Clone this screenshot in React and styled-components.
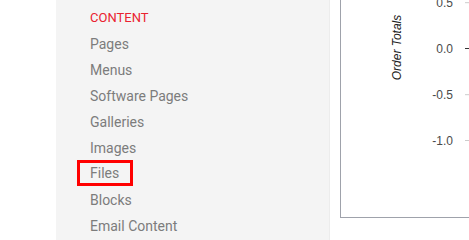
import React from "react";
import styled, { createGlobalStyle } from "styled-components";

const GlobalStyle = createGlobalStyle`
  html, body {
    margin: 0;
    padding: 0;
    background: #ffffff;
  }
  body {
    width: 469px;
    height: 240px;
    overflow: hidden;
  }
`;

const Page = styled.div`
  display: flex;
  flex-direction: row;
  height: 240px;
  padding-left: 56px;
`;

const Sidebar = styled.nav`
  width: 274px;
  flex-shrink: 0;
  background: #f4f4f4;
  border-right: 1px solid #ececec;
  padding: 5px 0 0 34px;
  box-sizing: border-box;
  font-family: Roboto, "Liberation Sans", sans-serif;
`;

const SectionTitle = styled.div`
  font-size: 13px;
  line-height: 26px;
  color: #ea2230;
  text-transform: uppercase;
`;

const NavItem = styled.div`
  font-size: 14px;
  line-height: 26px;
  height: 26px;
  color: #7c7c7c;
`;

const NavLabel = styled.span`
  display: inline-block;
  vertical-align: top;
  ${({ $marked }) =>
    $marked &&
    `
    box-sizing: border-box;
    height: 26px;
    margin: -1px 0 0 -13px;
    padding: 0 11px 0 10px;
    border: 3px solid #ff0000;
    line-height: 20px;
  `}
`;

const Main = styled.main`
  flex: 1;
  padding-left: 10px;
`;

const ChartFrame = styled.div`
  height: 218px;
  border-left: 1px solid #9fa2ab;
  border-bottom: 1px solid #9fa2ab;
  box-sizing: border-box;
  overflow: hidden;
`;

const ticks = [
  { label: "0.5", y: 2.7, zero: false },
  { label: "0.0", y: 48.5, zero: true },
  { label: "-0.5", y: 94.7, zero: false },
  { label: "-1.0", y: 140.5, zero: false },
];

function Chart() {
  return (
    <svg width="128" height="217" viewBox="0 0 128 217">
      <text
        transform="translate(60 47.5) rotate(-90)"
        textAnchor="middle"
        fontFamily="'Liberation Sans', Arial, sans-serif"
        fontSize="12"
        fontStyle="italic"
        fill="#222"
      >
        Order Totals
      </text>
      {ticks.map((t) => (
        <g key={t.label}>
          <text
            x="112"
            y={t.y + 4.2}
            textAnchor="end"
            fontFamily="'Liberation Sans', Arial, sans-serif"
            fontSize="12"
            fill="#4a4a4a"
          >
            {t.label}
          </text>
          <line
            x1="124"
            x2="128"
            y1={t.y}
            y2={t.y}
            stroke={t.zero ? "#333" : "#ccc"}
            strokeWidth="1"
          />
        </g>
      ))}
    </svg>
  );
}

const items = [
  "Pages",
  "Menus",
  "Software Pages",
  "Galleries",
  "Images",
  "Files",
  "Blocks",
  "Email Content",
];

export default function App() {
  return (
    <>
      <GlobalStyle />
      <Page>
        <Sidebar>
          <SectionTitle>Content</SectionTitle>
          {items.map((name) => (
            <NavItem key={name}>
              <NavLabel $marked={name === "Files"}>{name}</NavLabel>
            </NavItem>
          ))}
        </Sidebar>
        <Main>
          <ChartFrame>
            <Chart />
          </ChartFrame>
        </Main>
      </Page>
    </>
  );
}
